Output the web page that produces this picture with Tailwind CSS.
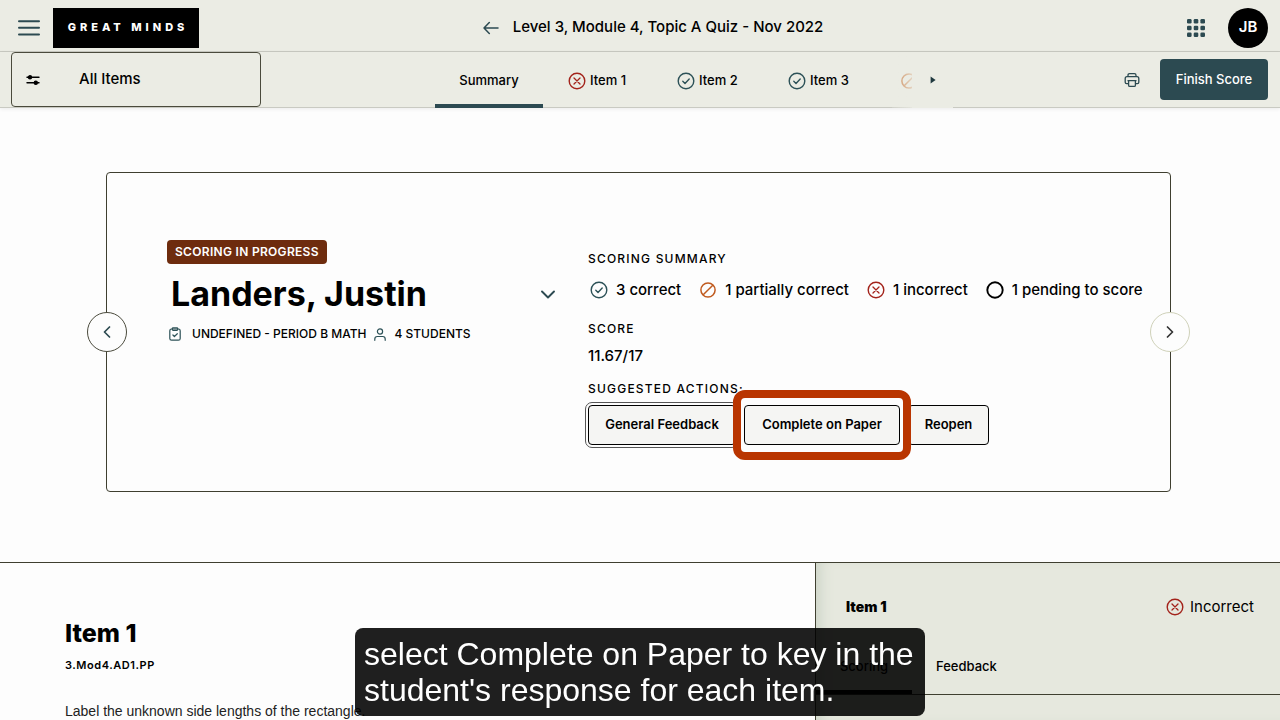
<!DOCTYPE html>
<html lang="en">
<head>
<meta charset="utf-8">
<meta name="viewport" content="width=device-width, initial-scale=1">
<title>Level 3, Module 4, Topic A Quiz</title>
<script src="https://cdn.jsdelivr.net/npm/@tailwindcss/browser@4"></script>
</head>
<body class="min-h-screen flex flex-col bg-[#fdfdfd] text-black font-['Inter',sans-serif] font-medium">
<svg class="hidden" aria-hidden="true">
  <symbol id="wrong" viewBox="0 0 18 18"><circle cx="9" cy="9" r="7.8" fill="none" stroke="currentColor" stroke-width="1.4"/><path d="M6 6l6 6M12 6l-6 6" fill="none" stroke="currentColor" stroke-width="1.3" stroke-linecap="round"/></symbol>
  <symbol id="right" viewBox="0 0 18 18"><circle cx="9" cy="9" r="7.8" fill="none" stroke="currentColor" stroke-width="1.4"/><path d="M5.8 9.3l2.2 2.1 4.2-4.4" fill="none" stroke="currentColor" stroke-width="1.4" stroke-linecap="round" stroke-linejoin="round"/></symbol>
  <symbol id="partial" viewBox="0 0 18 18"><circle cx="9" cy="9" r="7.1" fill="none" stroke="currentColor" stroke-width="1.5"/><path d="M4.2 13.800l9.600-9.600" fill="none" stroke="currentColor" stroke-width="1.5"/></symbol>
</svg>

<header class="grid grid-cols-[1fr_auto_1fr] items-center h-[52px] pl-[18px] pr-3 pt-1 bg-[#ebece4] border-b border-[#c9cac2]">
  <div class="flex items-center gap-[13px]">
    <button aria-label="Menu"><svg class="w-[22px] h-4 text-[#2c4a51]" viewBox="0 0 22 16" fill="none" stroke="currentColor" stroke-width="2" stroke-linecap="round"><path d="M1 1.2h20M1 7.8h20M1 14.4h20"/></svg></button>
    <a href="#" class="flex items-center justify-center w-[146px] h-10 bg-black text-white text-[11px] font-extrabold tracking-[4px] pl-1 whitespace-nowrap">GREAT MINDS</a>
  </div>
  <div class="flex items-center gap-[14px] pl-5">
    <a href="#" aria-label="Back"><svg class="w-4 h-3.5 text-[#2c4a51]" viewBox="0 0 16 14" fill="none" stroke="currentColor" stroke-width="1.5" stroke-linecap="round" stroke-linejoin="round"><path d="M15 7H1M6.3 1.5L1 7l5.3 5.5"/></svg></a>
    <h1 class="text-[15px] whitespace-nowrap">Level 3, Module 4, Topic A Quiz - Nov 2022</h1>
  </div>
  <div class="flex items-center justify-end gap-[23px]">
    <button aria-label="Apps"><svg class="w-[18px] h-[18px] text-[#2c4a51]" viewBox="0 0 18 18" fill="currentColor"><rect width="4.6" height="4.6" rx="1.3"/><rect x="6.7" width="4.6" height="4.6" rx="1.3"/><rect x="13.4" width="4.6" height="4.6" rx="1.3"/><rect y="6.7" width="4.6" height="4.6" rx="1.3"/><rect x="6.7" y="6.7" width="4.6" height="4.6" rx="1.3"/><rect x="13.4" y="6.7" width="4.6" height="4.6" rx="1.3"/><rect y="13.4" width="4.6" height="4.6" rx="1.3"/><rect x="6.7" y="13.4" width="4.6" height="4.6" rx="1.3"/><rect x="13.4" y="13.4" width="4.6" height="4.6" rx="1.3"/></svg></button>
    <button class="size-10 rounded-full bg-black text-white text-[15px] font-semibold">JB</button>
  </div>
</header>

<div class="flex items-stretch h-14 pl-[11px] pr-3 bg-[#ebece4] border-b border-[#c9cac2] shadow-[0_1px_4px_rgba(0,0,0,0.08)]">
  <button class="flex items-center w-[250px] px-3.5 gap-[39px] border border-[#4a4a3c] rounded text-[15px]">
    <svg class="w-[14px] h-[10px]" viewBox="0 0 14 10" fill="none" stroke="currentColor" stroke-width="1.4" stroke-linecap="round"><path d="M1 2.2h12M1 7.8h12"/><circle cx="4" cy="2.2" r="1.5" fill="currentColor"/><circle cx="9.8" cy="7.8" r="1.5" fill="currentColor"/></svg>
    All Items
  </button>
  <nav class="relative flex ml-[174px] text-[13px] -mb-px">
    <a href="#" class="flex items-center justify-center w-[108px] border-b-4 border-[#2c4a51] pt-1.5">Summary</a>
    <a href="#" class="flex items-center gap-1 w-[111px] pl-[25px] pt-px"><svg class="size-[18px] text-[#a3231b]"><use href="#wrong"/></svg>Item 1</a>
    <a href="#" class="flex items-center gap-1 w-[111px] pl-[23px] pt-px"><svg class="size-[18px] text-[#2c5157]"><use href="#right"/></svg>Item 2</a>
    <a href="#" class="flex items-center gap-1 w-[111px] pl-[23px] pt-px"><svg class="size-[18px] text-[#2c5157]"><use href="#right"/></svg>Item 3</a>
    <a href="#" aria-label="Item 4" class="flex items-center w-9 pl-6 pt-px overflow-hidden"><svg class="size-[18px] shrink-0 text-[#c46a2a]"><use href="#partial"/></svg></a>
    <span class="absolute right-0 top-0 h-full w-5 bg-linear-to-r from-[#ebece4]/20 to-[#ebece4]/80"></span>
    <button aria-label="More items" class="absolute left-full top-0 flex items-center h-full w-[41px] pl-[18px] bg-[#ebece4]"><svg class="w-[6px] h-2" viewBox="0 0 6 8"><path d="M.6.4v7.2L5.6 4z" fill="#20393f"/></svg></button>
  </nav>
  <div class="ml-auto flex items-center gap-5">
    <button aria-label="Print"><svg class="w-4 h-4 text-[#2c4a51]" viewBox="0 0 16 16" fill="none" stroke="currentColor" stroke-width="1.3" stroke-linejoin="round"><path d="M4 4.6V3.2Q4 1.6 5.600 1.600h4.800Q12 1.600 12 3.200v1.400M4 11.600H2.600Q1.200 11.600 1.200 10.200V6.600Q1.200 4.700 3 4.700h10q1.800 0 1.800 1.900v3.600q0 1.400-1.400 1.400H12M4.600 8.600h6.800v4.600q0 1.200-1.200 1.200H5.800q-1.200 0-1.200-1.200zM3.500 8.600h9"/></svg></button>
    <button class="w-[108px] h-[41px] rounded bg-[#2c4a51] text-white text-[13px] whitespace-nowrap">Finish Score</button>
  </div>
</div>

<section class="relative ml-[106px] mr-[109px] mt-16 h-80 grid grid-cols-[481px_1fr] border border-[#3f3f30] rounded">
  <button aria-label="Previous student" class="absolute -left-5 top-[139px] size-10 rounded-full border border-[#4a4a3c] bg-[#fdfdfd] grid place-items-center"><svg class="w-2 h-3" viewBox="0 0 8 12" fill="none" stroke="#2c4a51" stroke-width="1.7" stroke-linecap="round" stroke-linejoin="round"><path d="M6.500 1L1.500 6l5 5"/></svg></button>
  <button aria-label="Next student" class="absolute -right-5 top-[139px] size-10 rounded-full border border-[#cfd1b9] bg-[#fdfdfd] grid place-items-center"><svg class="w-2 h-3" viewBox="0 0 8 12" fill="none" stroke="#333" stroke-width="1.7" stroke-linecap="round" stroke-linejoin="round"><path d="M1.500 1l5 5-5 5"/></svg></button>

  <div class="pl-[60px] pt-[67px]">
    <span class="flex w-fit items-center h-6 px-2 rounded bg-[#6e2c0e] text-white text-xs font-semibold tracking-wide whitespace-nowrap">SCORING IN PROGRESS</span>
    <button class="flex items-center justify-between w-full pl-1 pr-[33px] mt-2 h-11 text-left">
      <span class="text-[34px] leading-[44px] font-bold whitespace-nowrap">Landers, Justin</span>
      <svg class="w-[14px] h-[9px]" viewBox="0 0 14 9" fill="none" stroke="#2c4a51" stroke-width="1.900" stroke-linecap="round" stroke-linejoin="round"><path d="M1 1.500l6 6 6-6"/></svg>
    </button>
    <div class="flex items-center mt-2 pl-0.5 text-xs leading-5 whitespace-nowrap">
      <svg class="w-3 h-[14px] mr-[11px]" viewBox="0 0 12 14" fill="none" stroke="#2c5157" stroke-width="1.200" stroke-linecap="round" stroke-linejoin="round"><rect x=".8" y="2" width="10.400" height="11.200" rx="1.800"/><rect x="3.300" y=".8" width="5.400" height="2.600" rx=".8"/><path d="M3.900 8l1.500 1.500L8.300 6.700"/></svg>
      <span>UNDEFINED - PERIOD B MATH</span>
      <svg class="w-3 h-[13px] mx-2" viewBox="0 0 12 13" fill="none" stroke="#2c5157" stroke-width="1.200" stroke-linecap="round"><circle cx="6" cy="3.500" r="2.600"/><path d="M.8 12.300V11q0-2.500 2.500-2.500h5.400q2.500 0 2.500 2.500v1.300"/></svg>
      <span>4 STUDENTS</span>
    </div>
  </div>

  <div class="pt-[78px] whitespace-nowrap">
    <h2 class="text-xs leading-4 tracking-widest">SCORING SUMMARY</h2>
    <ul class="flex items-center gap-[18px] mt-[13px] pl-0.5 text-[15px] leading-5">
      <li class="flex items-center gap-2"><svg class="size-[18px] text-[#2c5157]"><use href="#right"/></svg>3 correct</li>
      <li class="flex items-center gap-2"><svg class="size-[18px] text-[#c05a1e]"><use href="#partial"/></svg>1 partially correct</li>
      <li class="flex items-center gap-2"><svg class="size-[18px] text-[#a3231b]"><use href="#wrong"/></svg>1 incorrect</li>
      <li class="flex items-center gap-2"><svg class="size-[18px]" viewBox="0 0 18 18"><circle cx="9" cy="9" r="7.700" fill="none" stroke="#000" stroke-width="1.900"/></svg>1 pending to score</li>
    </ul>
    <h2 class="mt-[21px] text-xs leading-4 tracking-widest">SCORE</h2>
    <p class="mt-[9px] text-[15px] leading-5">11.67/17</p>
    <h2 class="mt-[15px] text-xs leading-4 tracking-widest">SUGGESTED ACTIONS:</h2>
    <div class="flex gap-2 mt-2 text-[13px] font-semibold">
      <button class="w-[148px] h-10 rounded border border-black bg-[#f5f5f3] outline outline-offset-2 outline-[#555]">General Feedback</button>
      <div class="relative">
        <span class="absolute -inset-x-[11px] -inset-y-[15px] z-10 rounded-xl border-8 border-[#b93500] bg-[#fdfdfd]"></span>
        <button class="relative z-20 w-[156px] h-10 rounded border border-black bg-[#f5f5f3]">Complete on Paper</button>
      </div>
      <button class="w-[81px] h-10 rounded border border-black bg-[#f5f5f3]">Reopen</button>
    </div>
  </div>
</section>

<main class="grow mt-[70px] grid grid-cols-[815fr_465fr] border-t border-[#3f3f30]">
  <article class="pl-[65px] pt-[54px]">
    <h2 class="text-[25px] leading-8 font-extrabold">Item 1</h2>
    <p class="mt-2 text-[11px] leading-4 tracking-wider font-semibold">3.Mod4.AD1.PP</p>
    <p class="mt-7 h-[19px] text-sm leading-5 font-normal text-[#222] font-['Liberation_Sans',sans-serif]">Label the unknown side lengths of the rectangle.</p>
  </article>
  <aside class="border-l border-[#3f3f30] bg-[#e6e8de] shadow-[inset_12px_0_14px_-8px_#cbd3c6]">
    <div class="flex items-center justify-between pl-[30px] pr-[26px] pt-8 leading-6">
      <h3 class="text-sm font-black">Item 1</h3>
      <span class="flex items-center gap-[6px] text-[15px] font-normal"><svg class="size-[18px] text-[#a3231b]"><use href="#wrong"/></svg>Incorrect</span>
    </div>
    <nav class="flex mt-5 h-14 border-b border-[#3f3f30] text-[13px]">
      <a href="#" class="flex items-center justify-center w-24 border-b-4 border-black pt-1">Scoring</a>
      <a href="#" class="flex items-center px-6">Feedback</a>
    </nav>
  </aside>
</main>

<div class="fixed bottom-1 left-1/2 -translate-x-1/2 z-30 w-[570px] px-[9px] py-2 rounded-lg bg-black/88 text-white text-[32px] leading-9 font-normal whitespace-nowrap font-['Liberation_Sans',sans-serif]">select Complete on Paper to key in the<br>student's response for each item.</div>
</body>
</html>
